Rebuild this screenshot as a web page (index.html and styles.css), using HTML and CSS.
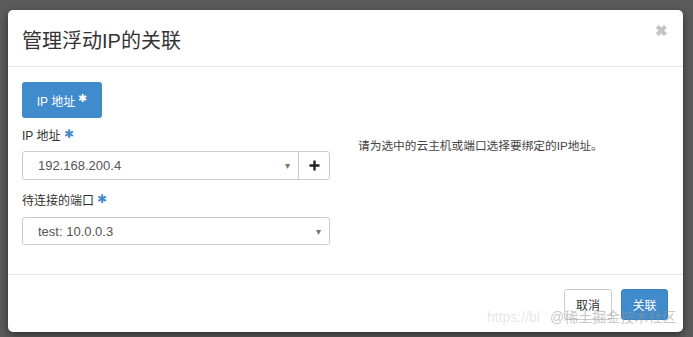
FILE: index.html
```html
<!DOCTYPE html>
<html lang="zh">
<head>
<meta charset="utf-8">
<title>管理浮动IP的关联</title>
<link rel="stylesheet" href="styles.css">
</head>
<body>
<div class="backdrop">
  <div class="modal">
    <div class="modal-header">
      <h3 class="modal-title">管理浮动IP的关联</h3>
      <span class="close">&#x2716;</span>
    </div>
    <div class="modal-body">
      <div class="tabs">
        <span class="tab-btn">IP 地址 <span class="req-w">&#x2731;</span></span>
      </div>
      <div class="row">
        <div class="form-col">
          <div class="form-group">
            <label class="label">IP 地址 <span class="req">&#x2731;</span></label>
            <div class="input-group">
              <div class="select grow">
                <span class="select-text">192.168.200.4</span>
                <span class="caret">&#x25BE;</span>
              </div>
              <div class="addon">
                <svg width="11" height="11" viewBox="0 0 11 11"><path d="M5.5 0.5v10M0.5 5.5h10" stroke="#222" stroke-width="2.4"/></svg>
              </div>
            </div>
          </div>
          <div class="form-group second">
            <label class="label">待连接的端口 <span class="req">&#x2731;</span></label>
            <div class="select full">
              <span class="select-text">test: 10.0.0.3</span>
              <span class="caret">&#x25BE;</span>
            </div>
          </div>
        </div>
        <div class="help-col">
          <p class="help">请为选中的云主机或端口选择要绑定的IP地址。</p>
        </div>
      </div>
    </div>
    <div class="modal-footer">
      <span class="btn btn-default">取消</span>
      <span class="btn btn-primary">关联</span>
    </div>
    <div class="watermark"><span class="wm-faint">https://bl</span><span class="wm-strong">@稀土掘金技术社区</span></div>
  </div>
</div>
</body>
</html>
```

FILE: styles.css
```css
* { box-sizing: border-box; }
html, body {
  margin: 0;
  padding: 0;
  width: 693px;
  height: 337px;
  overflow: hidden;
  font-family: "Liberation Sans", "Noto Sans CJK SC", sans-serif;
  color: #333;
}
.backdrop {
  width: 693px;
  height: 337px;
  background: #5b5b5b;
  padding: 10px 0 0 8px;
}
.modal {
  position: relative;
  width: 675px;
  height: 322px;
  background: #fff;
  border-radius: 5px;
  box-shadow: 0 3px 9px rgba(0,0,0,0.5);
  overflow: hidden;
}
.modal-header {
  height: 57px;
  border-bottom: 1px solid #e5e5e5;
  display: flex;
  align-items: center;
  justify-content: space-between;
  padding: 0 15px 0 14px;
}
.modal-title {
  margin: 0;
  font-weight: normal;
  font-size: 20px;
  color: #333;
  padding-top: 2px;
}
.close {
  color: #c4c4c4;
  font-size: 15px;
  font-weight: bold;
  margin-top: -14px;
}
.modal-body {
  height: 208px;
  padding: 15px 14px 0 14px;
  border-bottom: 1px solid #e5e5e5;
}
.tabs { display: flex; }
.tab-btn {
  display: inline-flex;
  align-items: center;
  justify-content: center;
  width: 80px;
  height: 36px;
  background: #3f8bcb;
  color: #fff;
  border-radius: 3px;
  font-size: 12px;
  gap: 3px;
}
.req-w { color: #fff; font-size: 11px; margin-top: -4px; }
.req { color: #3f8bcb; font-size: 12px; position: relative; top: -2px; }
.row {
  display: flex;
  gap: 28px;
  margin-top: 10px;
}
.form-col { width: 308px; }
.form-group { display: flex; flex-direction: column; }
.form-group.second { margin-top: 13px; }
.label {
  font-size: 12px;
  line-height: 17px;
  height: 17px;
  margin-bottom: 6px;
  color: #333;
}
.form-group.second .label { margin-bottom: 7px; }
.input-group { display: flex; height: 29px; }
.select {
  display: flex;
  align-items: center;
  justify-content: space-between;
  border: 1px solid #ccc;
  border-radius: 3px;
  padding: 0 8px 0 15px;
  font-size: 13px;
  color: #555;
  height: 29px;
}
.select.grow {
  flex: 1;
  border-radius: 3px 0 0 3px;
}
.select.full { height: 28px; }
.caret { color: #777; font-size: 10px; }
.addon {
  width: 32px;
  border: 1px solid #ccc;
  margin-left: -1px;
  border-radius: 0 3px 3px 0;
  display: flex;
  align-items: center;
  justify-content: center;
}
.help-col { flex: 1; padding-top: 9px; }
.help {
  margin: 0;
  font-size: 11.7px;
  line-height: 17px;
  color: #444;
}
.modal-footer {
  display: flex;
  justify-content: flex-end;
  gap: 9px;
  padding: 14px 15px 0 0;
}
.btn {
  display: inline-flex;
  align-items: center;
  justify-content: center;
  height: 31px;
  width: 48px;
  border-radius: 3px;
  font-size: 12px;
}
.btn-default {
  border: 1px solid #ccc;
  background: #fff;
  color: #333;
}
.btn-primary {
  width: 47px;
  background: #3f8bcb;
  border: 1px solid #3a82bf;
  color: #fff;
}
.watermark {
  position: absolute;
  left: 479px;
  top: 298px;
  font-size: 14px;
  line-height: 18px;
  white-space: nowrap;
}
.wm-faint { color: rgba(200,200,200,0.45); margin-right: 10px; }
.wm-strong { color: rgba(150,150,150,0.55); }
```
